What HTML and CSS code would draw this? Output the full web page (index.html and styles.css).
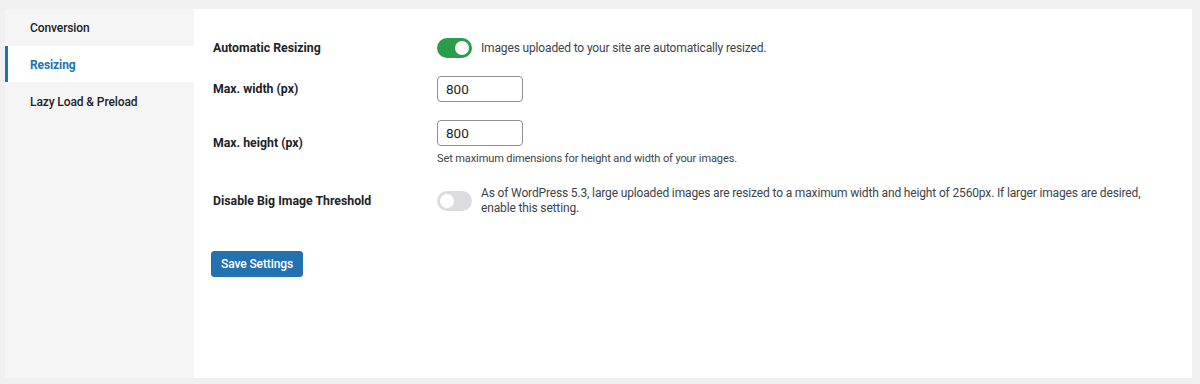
FILE: index.html
```html
<!DOCTYPE html>
<html lang="en">
<head>
    <meta charset="UTF-8">
    <meta name="viewport" content="width=device-width, initial-scale=1.0">
    <title>Image Settings - Resizing</title>
    <link rel="stylesheet" href="styles.css">
</head>
<body>
    <div class="settings-wrap">
        <nav class="side-nav">
            <a class="nav-item" href="#">Conversion</a>
            <a class="nav-item active" href="#">Resizing</a>
            <a class="nav-item" href="#">Lazy Load &amp; Preload</a>
        </nav>

        <div class="settings-panel">
            <div class="form-row">
                <div class="row-label">Automatic Resizing</div>
                <div class="row-field inline">
                    <span class="toggle on"><span class="knob"></span></span>
                    <span class="toggle-text">Images uploaded to your site are automatically resized.</span>
                </div>
            </div>

            <div class="form-row">
                <div class="row-label">Max. width (px)</div>
                <div class="row-field">
                    <input class="num-input" type="text" value="800">
                </div>
            </div>

            <div class="form-row">
                <div class="row-label">Max. height (px)</div>
                <div class="row-field">
                    <input class="num-input" type="text" value="800">
                    <p class="hint">Set maximum dimensions for height and width of your images.</p>
                </div>
            </div>

            <div class="form-row tall">
                <div class="row-label">Disable Big Image Threshold</div>
                <div class="row-field inline">
                    <span class="toggle"><span class="knob"></span></span>
                    <span class="toggle-text">As of WordPress 5.3, large uploaded images are resized to a maximum width and height of 2560px. If larger images are desired, enable this setting.</span>
                </div>
            </div>

            <button class="save-button" type="button">Save Settings</button>
        </div>
    </div>
</body>
</html>
```

FILE: styles.css
```css
:root {
    --page-bg: #f0f0f1;
    --nav-bg: #f5f5f5;
    --text-color: #1d2327;
    --muted-color: #3c434a;
    --blue: #2271b1;
    --green: #2a9d4b;
}

* {
    margin: 0;
    padding: 0;
    box-sizing: border-box;
    font-family: Roboto, 'Noto Sans', sans-serif;
}

body {
    background-color: var(--page-bg);
    color: var(--text-color);
    padding: 9px 8px 6px 5px;
}

.settings-wrap {
    display: flex;
    height: 369px;
}

.side-nav {
    width: 189px;
    background-color: var(--nav-bg);
    display: flex;
    flex-direction: column;
    gap: 1px;
}

.nav-item {
    display: flex;
    align-items: center;
    height: 36px;
    padding-left: 22px;
    padding-top: 1px;
    font-size: 12px;
    font-weight: 500;
    letter-spacing: -0.1px;
    color: var(--text-color);
    text-decoration: none;
    border-left: 3px solid transparent;
}

.nav-item.active {
    background-color: #fff;
    color: var(--blue);
    font-weight: 700;
    border-left-color: var(--blue);
}

.settings-panel {
    flex: 1;
    background-color: #fff;
    padding: 20px 40px 0 19px;
}

.form-row {
    display: flex;
    align-items: center;
    padding: 9px 0;
}

.form-row.tall {
    padding-top: 11px;
}

.row-label {
    width: 224px;
    flex-shrink: 0;
    font-size: 12.3px;
    font-weight: 700;
}

.row-field {
    font-size: 12px;
    letter-spacing: -0.15px;
    color: var(--muted-color);
}

.row-field.inline {
    display: flex;
    align-items: center;
    gap: 9px;
}

.toggle {
    position: relative;
    flex-shrink: 0;
    width: 35px;
    height: 20px;
    border-radius: 10px;
    background-color: #dcdcde;
}

.toggle.on {
    background-color: var(--green);
}

.knob {
    position: absolute;
    top: 3px;
    left: 3px;
    width: 14px;
    height: 14px;
    border-radius: 50%;
    background-color: #fff;
}

.toggle.on .knob {
    left: 18px;
}

.toggle-text {
    line-height: 15px;
}

.num-input {
    display: block;
    width: 86px;
    height: 26px;
    padding: 0 8px;
    border: 1px solid #8c8f94;
    border-radius: 4px;
    font-size: 13.5px;
    color: var(--text-color);
    outline: none;
}

.hint {
    margin-top: 6px;
    font-size: 11px;
    line-height: 14px;
    letter-spacing: -0.1px;
}

.save-button {
    margin-top: 26px;
    margin-left: -2px;
    height: 26px;
    padding: 0 9px;
    border: 1px solid var(--blue);
    border-radius: 3px;
    background-color: var(--blue);
    color: #fff;
    font-size: 12px;
    font-weight: 500;
    letter-spacing: -0.1px;
    cursor: pointer;
}
```
